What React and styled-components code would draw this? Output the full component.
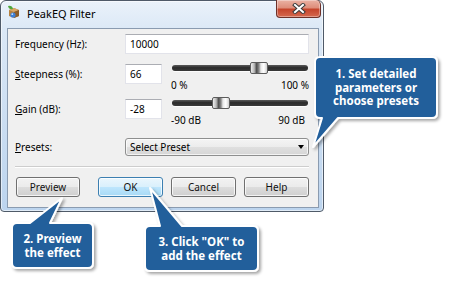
import { Fragment } from "react";
import styled, { createGlobalStyle } from "styled-components";

const GlobalStyle = createGlobalStyle`
  html, body {
    margin: 0;
    padding: 0;
    background: #fff;
  }
  body {
    font-family: "Noto Sans", "Liberation Sans", sans-serif;
  }
`;

const Stage = styled.div`
  position: relative;
  width: 450px;
  height: 287px;
  overflow: hidden;
  background: #fff;
`;

const Window = styled.div`
  box-sizing: border-box;
  width: 324px;
  height: 212px;
  display: flex;
  flex-direction: column;
  padding: 0 4px 3px 6px;
  border: 1px solid #4f5a68;
  border-radius: 6px 6px 4px 4px;
  background: linear-gradient(to bottom, #eaf2fa 0%, #dbe8f6 14%, #bcd4ee 100%);
  box-shadow: inset 0 0 0 1px rgba(255, 255, 255, 0.55);
`;

const TitleBar = styled.div`
  height: 27px;
  display: flex;
  align-items: flex-start;
`;

const AppIcon = styled.svg`
  margin-top: 4px;
  flex: none;
`;

const Title = styled.span`
  margin: 5px 0 0 7px;
  font-size: 11px;
  line-height: 16px;
  color: #000;
`;

const Close = styled.div`
  box-sizing: border-box;
  margin: -1px -2px 0 auto;
  width: 45px;
  height: 18px;
  display: flex;
  align-items: center;
  justify-content: center;
  border: 1px solid #6e3128;
  border-top: none;
  border-radius: 0 5px 4px 4px;
  background: linear-gradient(
    to bottom,
    #eab2a4 0%,
    #de8e7b 45%,
    #c5452c 55%,
    #d5694f 100%
  );
  box-shadow: inset 0 0 0 1px rgba(255, 255, 255, 0.35);
`;

const Client = styled.div`
  flex: 1;
  display: flex;
  flex-direction: column;
  padding: 5px 9px 0 7px;
  background: #f0f0f0;
  border: 1px solid #8a9bb0;
`;

const Row = styled.div`
  display: grid;
  grid-template-columns: ${(p) => (p.$slider ? "110px 37px 1fr" : "110px 1fr")};
  align-items: start;
  margin-top: ${(p) => p.$top || 0}px;
`;

const Label = styled.label`
  font-size: 10px;
  line-height: ${(p) => p.$h || 20}px;
  color: #000;
  white-space: nowrap;
`;

const TextBox = styled.div`
  box-sizing: border-box;
  height: 20px;
  padding: 0 4px;
  font-size: 10px;
  line-height: 18px;
  color: #000;
  background: #fff;
  border: 1px solid #e2e3ea;
  border-top-color: #abadb3;
`;

const Slider = styled.div`
  margin: -2px 0 0 9px;
  display: flex;
  flex-direction: column;
`;

const TrackArea = styled.div`
  position: relative;
  height: 12px;
  display: flex;
  align-items: center;
  padding: 0 1px;
`;

const Track = styled.div`
  flex: 1;
  height: 6px;
  border-radius: 3px;
  background: linear-gradient(to bottom, #5a5a5a 0%, #2b2b2b 45%, #3a3a3a 100%);
  box-shadow: 0 1px 0 rgba(255, 255, 255, 0.8);
`;

const Thumb = styled.div`
  position: absolute;
  top: 0;
  box-sizing: border-box;
  width: 18px;
  height: 12px;
  border: 1px solid #5c5c5c;
  border-radius: 2px;
  background: linear-gradient(
    to right,
    #eeeeee 0%,
    #b9b9b9 20%,
    #4d4d4d 35%,
    #8a8a8a 50%,
    #e8e8e8 62%,
    #ffffff 80%,
    #d0d0d0 100%
  );
`;

const Ticks = styled.div`
  display: flex;
  justify-content: space-between;
  margin-top: 5px;
  padding-right: ${(p) => p.$inset || 0}px;
  font-size: 10px;
  line-height: 12px;
  color: #000;
`;

const Select = styled.div`
  box-sizing: border-box;
  height: 18px;
  display: flex;
  align-items: center;
  justify-content: space-between;
  padding: 0 4px 0 4px;
  font-size: 10px;
  color: #000;
  border: 1px solid #8e8f8f;
  border-radius: 3px;
  background: linear-gradient(to bottom, #f4f4f4 0%, #ececec 50%, #dfdfdf 50%, #d6d6d6 100%);
  box-shadow: inset 0 0 0 1px rgba(255, 255, 255, 0.7);
`;

const Arrow = styled.span`
  width: 0;
  height: 0;
  border-left: 3px solid transparent;
  border-right: 3px solid transparent;
  border-top: 4px solid #000;
`;

const Separator = styled.div`
  margin-top: 10px;
  height: 1px;
  background: #cdcdcd;
  border-bottom: 1px solid #fff;
`;

const ButtonRow = styled.div`
  display: flex;
  gap: 8px;
  margin-top: 9px;
  padding-left: 1px;
`;

const Button = styled.div`
  box-sizing: border-box;
  width: ${(p) => p.$w || 65}px;
  height: 20px;
  display: flex;
  align-items: center;
  justify-content: center;
  margin-right: ${(p) => (p.$push ? "auto" : "0")};
  font-size: 10px;
  color: #111;
  border: 1px solid ${(p) => (p.$default ? "#3c7fb1" : "#707070")};
  border-radius: 3px;
  background: ${(p) =>
    p.$default
      ? "linear-gradient(to bottom, #eaf6fd 0%, #d9f0fc 50%, #bee6fd 50%, #a7d9f5 100%)"
      : "linear-gradient(to bottom, #f2f2f2 0%, #ebebeb 50%, #dddddd 50%, #cfcfcf 100%)"};
  box-shadow: inset 0 0 0 1px rgba(255, 255, 255, 0.75);
`;

const Overlay = styled.svg`
  position: absolute;
  left: 0;
  top: 0;
  pointer-events: none;
`;

const Note = styled.div`
  position: absolute;
  left: ${(p) => p.$x}px;
  top: ${(p) => p.$y}px;
  width: ${(p) => p.$w}px;
  height: ${(p) => p.$h}px;
  display: flex;
  align-items: center;
  justify-content: center;
  text-align: center;
  color: #fff;
  font-size: 11.5px;
  font-weight: 700;
  line-height: 13.5px;
`;

const bubbles = [
  "M320 57 H432 Q437 57 437 62 V113 Q437 118 432 118 H338 L313 147 L322 118 H320 Q315 118 315 113 V62 Q315 57 320 57 Z",
  "M17 223 H30 L62 198 L50 223 H88 Q93 223 93 228 V263 Q93 268 88 268 H17 Q12 268 12 263 V228 Q12 223 17 223 Z",
  "M150 226 H160 L150 188 L182 226 H253 Q258 226 258 231 V266 Q258 271 253 271 H150 Q145 271 145 266 V231 Q145 226 150 226 Z",
];

const notes = [
  { x: 315, y: 57, w: 122, h: 61, lines: ["1. Set detailed", "parameters or", "choose presets"] },
  { x: 12, y: 223, w: 81, h: 45, lines: ["2. Preview", "the effect"] },
  { x: 145, y: 226, w: 113, h: 45, lines: ['3. Click "OK" to', "add the effect"] },
];

function RangeSlider({ value, min, max, left, right, inset }) {
  const frac = (value - min) / (max - min);
  return (
    <Slider>
      <TrackArea>
        <Track />
        <Thumb style={{ left: `calc((100% - 18px) * ${frac})` }} />
      </TrackArea>
      <Ticks $inset={inset}>
        <span>{left}</span>
        <span>{right}</span>
      </Ticks>
    </Slider>
  );
}

function App() {
  return (
    <Stage>
      <GlobalStyle />
      <Window>
        <TitleBar>
          <AppIcon width="13" height="14" viewBox="0 0 13 14">
            <path d="M2 5 L7 3 L12 5 L12 11 L7 13 L2 11 Z" fill="#b5813f" />
            <path d="M2 5 L7 7 L12 5 L7 3 Z" fill="#d9a866" />
            <path d="M7 7 L7 13 L12 11 L12 5 Z" fill="#8c5d28" />
            <path d="M1 1 Q5 0 6 4 Q2 5 1 1 Z" fill="#4fa83c" />
            <circle cx="6" cy="10" r="2.6" fill="#3d7fd6" />
            <circle cx="5.3" cy="9.2" r="0.9" fill="#bfe0ff" />
          </AppIcon>
          <Title>PeakEQ Filter</Title>
          <Close>
            <svg width="14" height="11" viewBox="0 0 14 11">
              <path d="M3 2 L11 9 M11 2 L3 9" stroke="#3b3b3b" strokeWidth="4" strokeLinecap="square" />
              <path d="M3 2 L11 9 M11 2 L3 9" stroke="#fff" strokeWidth="2" strokeLinecap="square" />
            </svg>
          </Close>
        </TitleBar>
        <Client>
          <Row>
            <Label>Frequency (Hz):</Label>
            <TextBox>10000</TextBox>
          </Row>
          <Row $slider $top={10}>
            <Label>
              <u>S</u>teepness (%):
            </Label>
            <TextBox>66</TextBox>
            <RangeSlider value={66} min={0} max={100} left="0 %" right="100 %" />
          </Row>
          <Row $slider $top={8}>
            <Label>
              <u>G</u>ain (dB):
            </Label>
            <TextBox>-28</TextBox>
            <RangeSlider value={-28} min={-90} max={90} left="-90 dB" right="90 dB" inset={4} />
          </Row>
          <Row $top={12}>
            <Label $h={18}>
              <u>P</u>resets:
            </Label>
            <Select>
              <span>Select Preset</span>
              <Arrow />
            </Select>
          </Row>
          <Separator />
          <ButtonRow>
            <Button $w={64} $push>
              Preview
            </Button>
            <Button $default>OK</Button>
            <Button>Cancel</Button>
            <Button>Help</Button>
          </ButtonRow>
        </Client>
      </Window>

      <Overlay width="450" height="287" viewBox="0 0 450 287">
        <defs>
          <filter id="callout-shadow" x="-20%" y="-20%" width="140%" height="140%">
            <feDropShadow dx="2" dy="2" stdDeviation="1.6" floodColor="#000" floodOpacity="0.35" />
          </filter>
        </defs>
        {bubbles.map((d, i) => (
          <path
            key={i}
            d={d}
            fill="#215e9b"
            stroke="#fff"
            strokeWidth="2"
            strokeLinejoin="round"
            filter="url(#callout-shadow)"
          />
        ))}
      </Overlay>
      {notes.map((n, i) => (
        <Note key={i} $x={n.x} $y={n.y} $w={n.w} $h={n.h}>
          <span>
            {n.lines.map((l, j) => (
              <Fragment key={j}>
                {j > 0 && <br />}
                {l}
              </Fragment>
            ))}
          </span>
        </Note>
      ))}
    </Stage>
  );
}

export default App;
